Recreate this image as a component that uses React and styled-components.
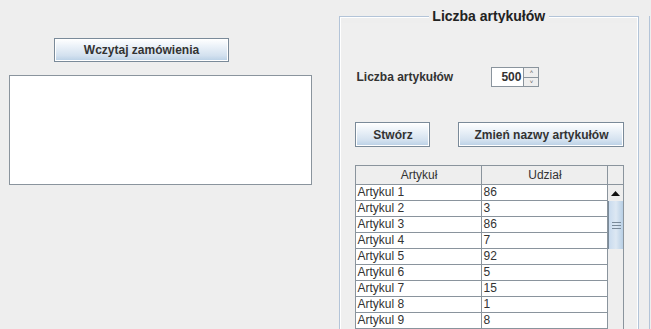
import React from 'react';
import styled, { createGlobalStyle } from 'styled-components';

const GlobalStyle = createGlobalStyle`
	html, body {
		margin: 0;
		padding: 0;
		background: #eeeeee;
		overflow: hidden;
	}
	body {
		font-family: 'Liberation Sans', Arial, sans-serif;
		color: #333333;
	}
`;

const rows = [
	['Artykul 1', '86'],
	['Artykul 2', '3'],
	['Artykul 3', '86'],
	['Artykul 4', '7'],
	['Artykul 5', '92'],
	['Artykul 6', '5'],
	['Artykul 7', '15'],
	['Artykul 8', '1'],
	['Artykul 9', '8'],
];

const Window = styled.div`
	display: flex;
	width: 651px;
	height: 329px;
	overflow: hidden;
	background: #eeeeee;
`;

const LeftColumn = styled.div`
	width: 331px;
	padding-left: 9px;
	display: flex;
	flex-direction: column;
	align-items: flex-start;
`;

const MetalButton = styled.button`
	box-sizing: border-box;
	width: ${({ $w }) => $w}px;
	height: ${({ $h }) => $h || 24}px;
	margin: 0;
	padding: 0;
	border: 1px solid #7a8a99;
	background: linear-gradient(to bottom, #ffffff 0%, #eaf1f8 35%, #d3e1ef 75%, #b8cfe5 100%);
	font-family: 'Liberation Sans', Arial, sans-serif;
	font-size: 12px;
	font-weight: bold;
	color: #333333;
	box-shadow: 0 0 0 1px #ffffff inset;
`;

const LoadButton = styled(MetalButton)`
	margin-top: 38px;
	margin-left: 45px;
`;

const TextArea = styled.div`
	box-sizing: border-box;
	margin-top: 13px;
	width: 303px;
	height: 110px;
	background: #ffffff;
	border: 1px solid #8a949d;
`;

const Panel = styled.div`
	width: 300px;
	margin-top: 9px;
	display: flex;
	flex-direction: column;
`;

const PanelTitle = styled.div`
	display: flex;
	align-items: center;
	height: 14px;
	font-size: 14px;
	font-weight: bold;
	color: #222222;

	&::before,
	&::after {
		content: '';
		flex: 1;
		box-sizing: border-box;
		height: 7px;
		align-self: flex-end;
		border-top: 1px solid #b3c4d8;
	}
	&::before {
		border-left: 1px solid #b3c4d8;
		box-shadow: 1px 1px 0 #ffffff inset;
	}
	&::after {
		border-right: 1px solid #b3c4d8;
		box-shadow: -1px 1px 0 #ffffff inset;
	}
	span {
		padding: 0 4px 0 3px;
		line-height: 14px;
	}
`;

const PanelBody = styled.div`
	border-left: 1px solid #b3c4d8;
	border-right: 1px solid #b3c4d8;
	box-shadow: 1px 0 0 #ffffff inset, -1px 0 0 #ffffff inset;
	background: #efefef;
	height: 320px;
	padding: 44px 0 0 15px;
`;

const SpinnerRow = styled.div`
	display: flex;
	align-items: center;
	height: 20px;
`;

const Label = styled.span`
	font-size: 12px;
	font-weight: bold;
	color: #333333;
	width: 135px;
	padding-left: 1px;
`;

const Spinner = styled.div`
	display: flex;
	height: 20px;
	border: 1px solid #8a949d;
	box-sizing: border-box;
	background: #ffffff;
`;

const SpinnerValue = styled.div`
	width: 29px;
	text-align: right;
	font-size: 12px;
	font-weight: bold;
	line-height: 18px;
	padding-right: 2px;
`;

const SpinnerArrows = styled.div`
	width: 14px;
	display: flex;
	flex-direction: column;
	border-left: 1px solid #8a949d;
	background: #eeeeee;
`;

const ArrowCell = styled.div`
	flex: 1;
	display: flex;
	align-items: center;
	justify-content: center;
	font-size: 6px;
	color: #555555;
	line-height: 1;
	& + & {
		border-top: 1px solid #8a949d;
	}
`;

const ButtonRow = styled.div`
	display: flex;
	gap: 28px;
	margin-top: 35px;
`;

const Table = styled.div`
	margin-top: 18px;
	width: 269px;
	display: flex;
	flex-direction: column;
`;

const TableRow = styled.div`
	display: grid;
	grid-template-columns: 127px 126px 16px;
	height: ${({ $header }) => ($header ? 20 : 16)}px;
	box-sizing: border-box;
`;

const HeaderCell = styled.div`
	box-sizing: border-box;
	border: 1px solid #8a949d;
	border-left: ${({ $first }) => ($first ? '1px solid #8a949d' : 'none')};
	background: #eeeeee;
	font-size: 12px;
	color: #333333;
	text-align: center;
	line-height: 18px;
`;

const Cell = styled.div`
	box-sizing: border-box;
	border-right: 1px solid #8a949d;
	border-bottom: 1px solid #8a949d;
	border-left: ${({ $first }) => ($first ? '1px solid #8a949d' : 'none')};
	background: #ffffff;
	font-size: 12px;
	color: #333333;
	line-height: 15px;
	padding-left: 1px;
	white-space: nowrap;
	overflow: hidden;
`;

const ScrollCell = styled.div`
	box-sizing: border-box;
	border-right: 1px solid #8a949d;
	background: ${({ $kind }) =>
		$kind === 'thumb' ? 'linear-gradient(to right, #c9dbee, #dde8f3 50%, #b8cfe5)' : '#eeeeee'};
	border-left: ${({ $kind }) => ($kind === 'thumb' ? '1px solid #7a8a99' : 'none')};
	display: flex;
	align-items: center;
	justify-content: center;
`;

const RightEdge = styled.div`
	margin-left: 10px;
	margin-top: 16px;
	width: 1px;
	border-left: 1px solid #b3c4d8;
	height: 320px;
`;

const Grip = () => (
	<svg width="9" height="7" viewBox="0 0 9 7">
		<path d="M0 0.5h9M0 3.5h9M0 6.5h9" stroke="#7a8a99" strokeWidth="1" />
	</svg>
);

const UpArrow = () => (
	<svg width="9" height="5" viewBox="0 0 9 5">
		<path d="M4.5 0L9 5H0z" fill="#111111" />
	</svg>
);

function scrollKind(i) {
	if (i === 0) return 'arrow';
	if (i >= 1 && i <= 3) return 'thumb';
	return 'track';
}

function App() {
	return (
		<>
			<GlobalStyle />
			<Window>
				<LeftColumn>
					<LoadButton type="button" $w={175}>
						Wczytaj zamówienia
					</LoadButton>
					<TextArea />
				</LeftColumn>

				<Panel>
					<PanelTitle>
						<span>Liczba artykułów</span>
					</PanelTitle>
					<PanelBody>
						<SpinnerRow>
							<Label>Liczba artykułów</Label>
							<Spinner>
								<SpinnerValue>500</SpinnerValue>
								<SpinnerArrows>
									<ArrowCell>˄</ArrowCell>
									<ArrowCell>˅</ArrowCell>
								</SpinnerArrows>
							</Spinner>
						</SpinnerRow>

						<ButtonRow>
							<MetalButton type="button" $w={75} $h={25}>
								Stwórz
							</MetalButton>
							<MetalButton type="button" $w={166} $h={25}>
								Zmień nazwy artykułów
							</MetalButton>
						</ButtonRow>

						<Table>
							<TableRow $header>
								<HeaderCell $first>Artykuł</HeaderCell>
								<HeaderCell>Udział</HeaderCell>
								<HeaderCell />
							</TableRow>
							{rows.map(([name, share], i) => (
								<TableRow key={name}>
									<Cell $first>{name}</Cell>
									<Cell>{share}</Cell>
									<ScrollCell $kind={scrollKind(i)}>
										{i === 0 && <UpArrow />}
										{i === 2 && <Grip />}
									</ScrollCell>
								</TableRow>
							))}
						</Table>
					</PanelBody>
				</Panel>

				<RightEdge />
			</Window>
		</>
	);
}

export default App;
